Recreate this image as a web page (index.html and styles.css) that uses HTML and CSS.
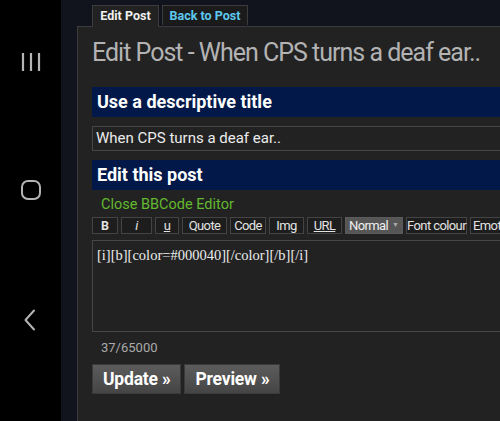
FILE: index.html
```html
<!DOCTYPE html>
<html>
<head>
<meta charset="utf-8">
<link rel="stylesheet" href="styles.css">
</head>
<body>
<div class="screen">
  <nav class="sysnav">
    <svg class="ico ico-recent" width="20" height="20" viewBox="0 0 20 20"><path d="M2 1v18M10 1v18M18 1v18" stroke="#b4b4b4" stroke-width="2.2" fill="none"/></svg>
    <svg class="ico ico-home" width="22" height="22" viewBox="0 0 22 22"><rect x="2" y="2" width="18" height="18" rx="6" stroke="#b4b4b4" stroke-width="2" fill="none"/></svg>
    <svg class="ico ico-back" width="14" height="22" viewBox="0 0 14 22"><path d="M11 1.5 2.5 11 11 20.5" stroke="#b4b4b4" stroke-width="2" fill="none" stroke-linecap="round" stroke-linejoin="round"/></svg>
  </nav>
  <main class="page">
    <div class="tabs">
      <div class="tab tab-active">Edit Post</div>
      <div class="tab tab-link">Back to Post</div>
    </div>
    <section class="panel">
      <h1 class="title">Edit Post - When CPS turns a deaf ear..</h1>
      <h2 class="bar">Use a descriptive title</h2>
      <div class="input">When CPS turns a deaf ear..</div>
      <h2 class="bar">Edit this post</h2>
      <div class="bbclose">Close BBCode Editor</div>
      <div class="toolbar">
        <span class="tb tb-b">B</span>
        <span class="tb tb-i">i</span>
        <span class="tb tb-u">u</span>
        <span class="tb tb-quote">Quote</span>
        <span class="tb tb-code">Code</span>
        <span class="tb tb-img">Img</span>
        <span class="tb tb-url">URL</span>
        <span class="tb tb-sel">Normal<span class="arrow">▼</span></span>
        <span class="tb tb-font">Font colour</span>
        <span class="tb">Emoticons</span>
      </div>
      <div class="textarea">[i][b][color=#000040][/color][/b][/i]</div>
      <div class="count">37/65000</div>
      <div class="actions">
        <span class="btn">Update »</span>
        <span class="btn">Preview »</span>
      </div>
    </section>
  </main>
</div>
</body>
</html>
```

FILE: styles.css
```css
* { box-sizing: border-box; margin: 0; padding: 0; }
html, body { width: 500px; height: 421px; overflow: hidden; background: #000; }
body { font-family: Roboto, "Noto Sans", sans-serif; }

.screen { display: flex; width: 500px; height: 421px; overflow: hidden; }

.sysnav {
  width: 61px; flex: none; background: #000;
  display: flex; flex-direction: column; align-items: center;
}
.ico { display: block; }
.ico-recent { margin-top: 52px; margin-left: 1px; }
.ico-home { margin-top: 107px; margin-left: 1px; }
.ico-back { margin-top: 108px; margin-left: -1px; }

.page {
  flex: 1; min-width: 0; background: #11141d;
  padding: 5px 0 0 16px; overflow: hidden;
}

.tabs { display: flex; gap: 3px; margin-left: 15px; height: 21px; position: relative; z-index: 1; }
.tab {
  font-size: 12.5px; font-weight: 700; text-align: center;
  line-height: 20px; border: 1px solid #3c3c3c; border-bottom: none;
}
.tab-active { background: #222; color: #f0f0f0; height: 22px; width: 67px; }
.tab-link { background: #1b1b1b; color: #5ec8ef; width: 86px; height: 20px; }

.panel {
  width: 700px; height: 420px; background: #222;
  border-top: 1px solid #3c3c3c; border-left: 1px solid #3c3c3c;
  padding: 11px 0 0 14px;
}

.title {
  font-size: 25px; font-weight: 400; color: #b3b3b3; line-height: 30px;
  letter-spacing: -1px; margin-bottom: 19px; white-space: nowrap;
}

.bar {
  background: #011849; color: #fff; font-size: 18px; font-weight: 700;
  height: 30px; line-height: 30px; padding-left: 5px;
}

.input {
  margin-top: 9px; height: 25px; border: 1px solid #464646;
  color: #ececec; font-size: 15px; line-height: 23px; padding-left: 3px;
  margin-bottom: 9px;
}

.bbclose { color: #63b92f; font-size: 14.5px; line-height: 18px; padding: 6px 0 0 9px; height: 27px; }

.toolbar { display: flex; gap: 3px; height: 17px; }
.tb {
  flex: none; display: flex; align-items: center; justify-content: center;
  height: 17px; border: 1px solid #444; background: #1d1d1d; color: #e2e2e2;
  font-size: 13px; letter-spacing: -0.6px; line-height: 15px; padding: 0 2px;
  white-space: nowrap;
}
.tb-b { width: 26px; font-weight: 700; font-size: 12.5px; letter-spacing: 0; }
.tb-i { width: 31px; font-style: italic; }
.tb-u { width: 24px; text-decoration: underline; }
.tb-quote { width: 45px; }
.tb-code { width: 36px; }
.tb-img { width: 35px; }
.tb-url { width: 35px; text-decoration: underline; }
.tb-sel { width: 58px; background: #565656; border-color: #5a5a5a; color: #eee; }
.tb-font { width: 61px; }
.arrow { font-size: 7px; color: #aaa; margin-left: 4px; letter-spacing: 0; }

.textarea {
  margin-top: 6px; height: 92px; border: 1px solid #464646; background: #222;
  color: #ececec; font-family: "Liberation Serif", "DejaVu Serif", serif; font-size: 14.5px;
  padding: 5px 0 0 4px; line-height: 18px;
}

.count { color: #aaa; font-size: 13px; line-height: 16px; padding: 8px 0 0 9px; height: 32px; }

.actions { display: flex; gap: 3px; }
.btn {
  height: 30px; line-height: 29px; padding: 0 10px; color: #fff;
  font-size: 17.5px; font-weight: 700; letter-spacing: -0.2px;
  background: linear-gradient(#5c5c5c, #454545); border: 1px solid #3a3a3a;
}
```
